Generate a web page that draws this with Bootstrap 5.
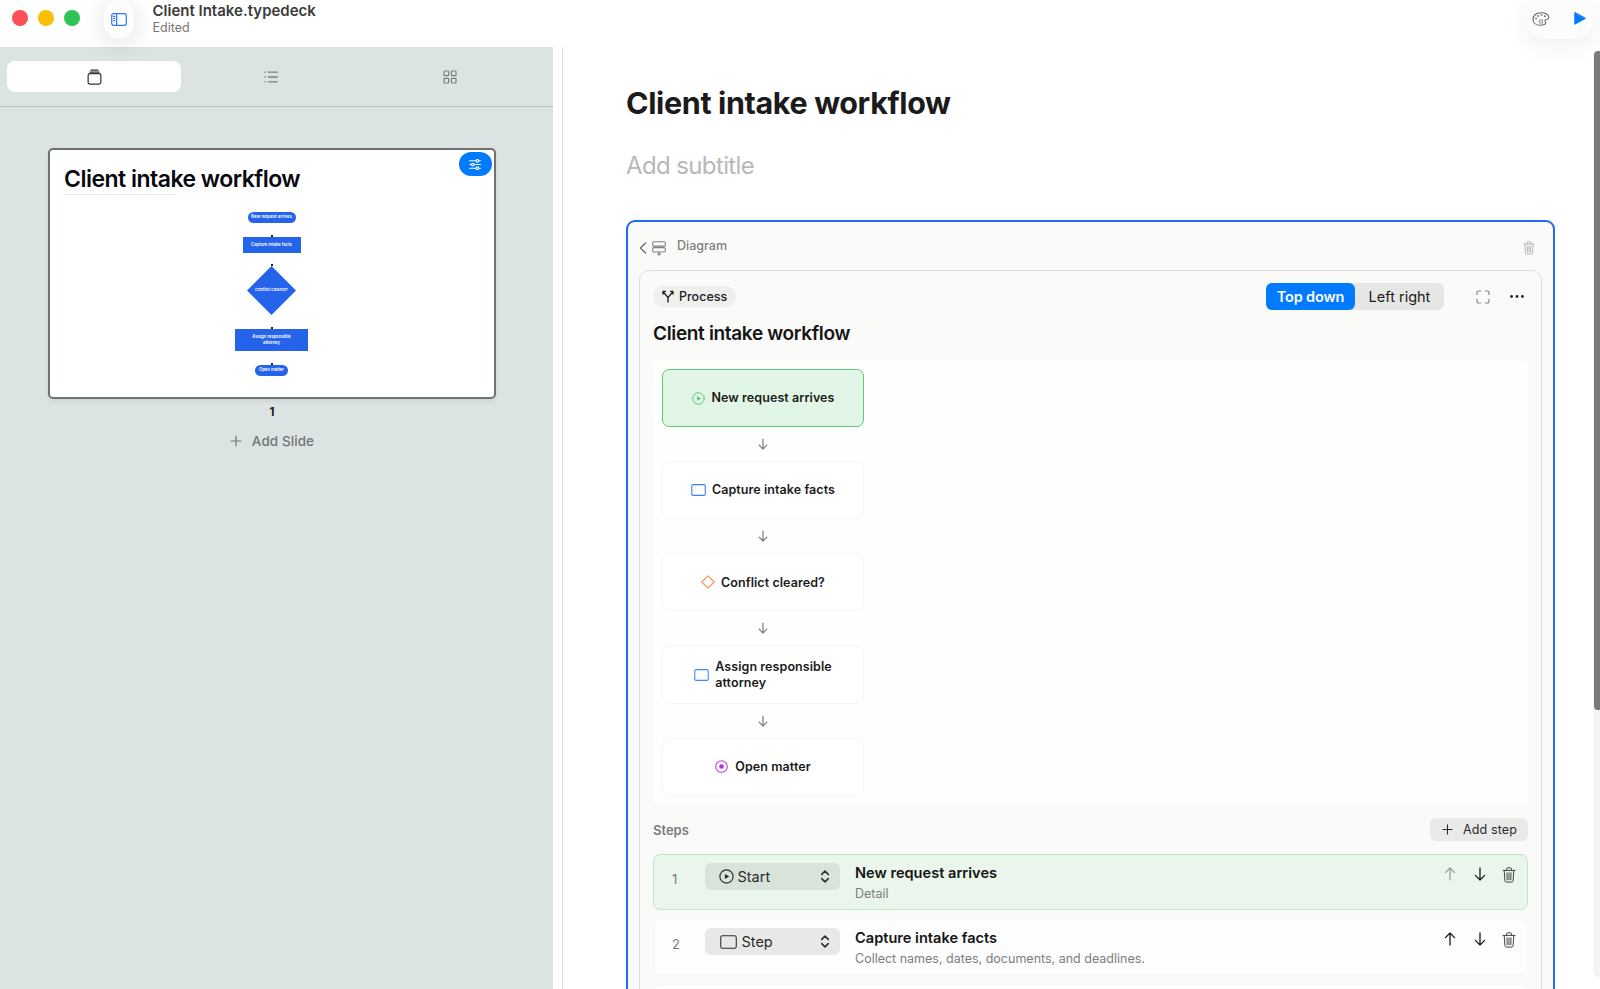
<!DOCTYPE html>
<html lang="en">
<head>
<meta charset="utf-8">
<meta name="viewport" content="width=device-width, initial-scale=1">
<title>Client Intake.typedeck</title>
<link href="https://cdn.jsdelivr.net/npm/bootstrap@5.3.0/dist/css/bootstrap.min.css" rel="stylesheet">
<style>
body{font-family:Inter,"Liberation Sans",sans-serif;color:#1b1b1b;background:#fff;height:100vh;overflow:hidden;font-size:13px;line-height:16px}
svg{display:block;flex:none;fill:none;stroke-linecap:round;stroke-linejoin:round}
svg:not([stroke]){stroke:currentColor}
.titlebar{height:47px;position:relative;z-index:2;flex:none}
.light{width:16px;height:16px}
.toggle-pill{width:30px;height:40px;border-radius:15px;background:#fdfdfd;box-shadow:0 5px 26px rgba(0,0,0,.13);margin-left:24px;margin-top:-1px}
.doc-title{font-size:15px;line-height:18px;font-weight:600;color:#3b3b3b}
.doc-state{font-size:12.5px;line-height:15px;color:#777}
.tools{width:68px;height:41px;margin-top:-2px;margin-right:6px;border-radius:20px;background:#fcfcfc;box-shadow:0 5px 26px rgba(0,0,0,.07)}
.sidebar{width:553px;background:#dce4e3}
.tabs-row{height:60px;border-bottom:1px solid #bcc4c3;padding:14px 0 0 7px}
.tab-item{height:31px;border-radius:8px;color:#7a8180}
.tab-on{background:#fff;color:#333}
.slide{width:448px;height:251px;margin:41px 0 0 47.5px;border:2px solid #6d7372;border-radius:5px;background:#fff;box-shadow:0 2px 5px rgba(0,0,0,.07)}
.slide-title{font-size:23px;line-height:28px;font-weight:600;color:#08080f;padding:15px 0 0 14.5px;letter-spacing:-.52px}
.slide-rule{width:112px;height:1px;background:#e3e3fa;margin:1px 0 0 14px}
.slide-opts{right:2px;top:2px;width:33px;height:24px;border-radius:12px;background:#007aff;color:#fff}
.node{background:#2563eb;color:#fff;font-size:4.2px;line-height:6.5px;font-weight:600;text-align:center;white-space:nowrap}
.stem{width:2px;height:2px;background:#223}
.dia{width:49px;height:49px;clip-path:polygon(50% 0,100% 50%,50% 100%,0 50%)}
.add-slide{font-size:13.5px;color:#6f7675;font-weight:500;letter-spacing:.08px}
.editor{border-left:1px solid #e2e2e2;margin-left:9px;padding:0 45px 0 63px;overflow:hidden}
.h-title{font-size:30.5px;line-height:38px;font-weight:700;letter-spacing:-.37px;margin-top:37px}
.h-sub{font-size:24px;line-height:30px;color:#b8b8b8;margin-top:28.5px;letter-spacing:-.62px}
.block{border:2px solid #2169f6;border-radius:9px;background:#fafaf8;margin-top:39.5px;height:900px;padding:0 11px}
.block-head{height:48px;color:#808080;font-weight:500;font-size:12.5px}
.panel{border:1px solid #dedede;border-radius:10px;padding:12px 13px;height:840px}
.kind{height:21px;border-radius:11px;background:#efefed;padding:0 9px 0 9px;font-weight:500;font-size:12.5px;color:#222}
.seg{height:27px;border-radius:6px;background:#e6e6e4;font-size:14.5px}
.seg-on{height:27px;width:89px;border-radius:6px;background:#007aff;color:#fff;font-weight:600;letter-spacing:-.15px}
.p-title{font-size:19px;line-height:24px;font-weight:600;margin-top:12px;color:#151515;letter-spacing:-.34px}
.flow-canvas{background:#fefefe;border-radius:6px;margin-top:14px;height:444px;padding:9px 0 0 9px}
.step-box{width:202px;height:58px;border:1px solid #f6f6f6;border-radius:7px;font-weight:600;font-size:12.5px;line-height:15.5px;letter-spacing:.07px;background:#fff}
.step-start{background:#e1f6e6;border:1.5px solid #5fcb78}
.arrow-gap{height:34.2px;width:202px;color:#808080}
.steps-label{font-weight:600;color:#7b7b7b}
.add-step{height:23px;border-radius:6px;background:#e9e9e7;padding:0 11px 0 12px;font-size:12.5px;color:#2b2b2b;letter-spacing:.12px}
.step-row{height:56px;border:1px solid #f8f8f8;border-radius:7px;background:#fdfdfd;margin-bottom:9px;padding:0 17px 0 18px}
.row-start{background:#eaf5ec;border-color:#b9ebc6}
.num{width:32.5px;color:#777;margin-top:16px}
.pick{width:135px;height:27px;border-radius:6px;background:#e8e8e8;margin-top:8px;font-size:14.5px;color:#2b2b2b;padding:0 10px 0 14px}
.row-start .pick{background:#d8e3da}
.st-title{font-size:14.6px;line-height:18px;font-weight:600;color:#151515;margin-top:9px}
.st-sub{font-size:12.5px;line-height:16px;color:#7d7d7d;margin-top:4px}
.track{right:0;top:51px;width:7px;height:926px;background:#f4f4f4;border-radius:6px 0 0 6px}
.thumb{width:6px;height:659px;margin-left:1px;background:#7a7a7a;border-radius:4px 0 0 4px}
</style>
</head>
<body>
<svg width="0" height="0" class="position-absolute">
<defs>
<symbol id="trash" viewBox="0 0 14 16"><path d="M1 3.4h12M4.6 3.2V1.8q0-1 1-1h2.8q1 0 1 1v1.4M2.2 3.6l.7 10q.1 1.5 1.6 1.5h5q1.5 0 1.6-1.5l.7-10M5 5.8l.2 7M7 5.8v7M9 5.8l-.2 7"/></symbol>
<symbol id="down" viewBox="0 0 12 14"><path d="M6 1v12M1.4 8.4 6 13l4.6-4.6"/></symbol>
<symbol id="up" viewBox="0 0 12 14"><path d="M6 13V1M1.4 5.6 6 1l4.6 4.6"/></symbol>
<symbol id="rect" viewBox="0 0 16 13"><rect x=".7" y=".7" width="14.6" height="11.6" rx="1.6"/></symbol>
<symbol id="play" viewBox="0 0 14 14"><circle cx="7" cy="7" r="6.2"/><path d="M5.5 4.6v4.8L9.6 7z" fill="currentColor" stroke="none"/></symbol>
<symbol id="updown" viewBox="0 0 9 13"><path d="M1.2 4.4 4.5 1.1l3.3 3.3M1.2 8.6l3.3 3.3 3.3-3.3"/></symbol>
<symbol id="plus" viewBox="0 0 12 12"><path d="M6 1v10M1 6h10"/></symbol>
</defs>
</svg>
<div class="d-flex flex-column vh-100 overflow-hidden">
<header class="titlebar d-flex align-items-start">
  <div class="d-flex" style="gap:10px;padding:10px 0 0 12px">
    <span class="light rounded-circle" style="background:#fb5058"></span>
    <span class="light rounded-circle" style="background:#fabf05"></span>
    <span class="light rounded-circle" style="background:#2fc257"></span>
  </div>
  <div class="toggle-pill d-flex align-items-center justify-content-center">
    <svg width="16" height="13" viewBox="0 0 16 13" stroke="#2f78f5" stroke-width="1.2"><rect x=".7" y=".7" width="14.6" height="11.6" rx="2"/><path d="M5.6 1v11M2.4 3.4h1.5M2.4 5.5h1.5M2.4 7.6h1.5"/></svg>
  </div>
  <div style="padding:2px 0 0 18.5px">
    <div class="doc-title">Client Intake.typedeck</div>
    <div class="doc-state">Edited</div>
  </div>
  <div class="tools ms-auto d-flex align-items-center justify-content-between" style="padding:0 8px 0 6px">
    <svg width="18" height="14" viewBox="0 0 18 14" stroke="#666" stroke-width="1.1"><path d="M8.6.8C4 .8 1 3.8 1 7.400 1 10.900 4 13.200 8.400 13.200c3.200 0 5.400-.8 5.300-2.500-.1-1-.9-1.300-.7-2.300.3-1.200 3.900-.6 3.900-3C16.900 2.600 13.200.8 8.600.8z"/><circle cx="9" cy="9.600" r="1.700" stroke="#999"/><path d="M4 6.500h.1M6 3.900h.1M9.400 3h.1M12.800 4.200h.1" stroke-width="1.700"/></svg>
    <svg width="12" height="13" viewBox="0 0 12 13" stroke="#007aff"><path d="M.8.8v11.400L11.200 6.500z" fill="#007aff"/></svg>
  </div>
</header>
<div class="d-flex flex-grow-1" style="min-height:0">
  <aside class="sidebar flex-shrink-0">
    <div class="tabs-row d-flex">
      <div class="tab-item tab-on d-flex align-items-center justify-content-center" style="width:174px">
        <svg width="15" height="16" viewBox="0 0 16 17" stroke-width="1.300"><rect x="1.200" y="5" width="13.600" height="11" rx="2"/><path d="M3 3.200h10M4.200 1.100h7.600"/></svg>
      </div>
      <div class="tab-item d-flex align-items-center justify-content-center" style="width:180px">
        <svg width="14" height="12" viewBox="0 0 14 12" stroke-width="1.300"><path d="M4.300 1.200h9M4.300 6h9M4.300 10.800h9M.9 1.200h.4M.9 6h.4M.9 10.800h.4"/></svg>
      </div>
      <div class="tab-item d-flex align-items-center justify-content-center" style="width:177px">
        <svg width="14" height="14" viewBox="0 0 14 14" stroke-width="1.200"><rect x="1" y="1" width="4.600" height="4.600" rx=".7"/><rect x="8.400" y="1" width="4.600" height="4.600" rx=".7"/><rect x="1" y="8.400" width="4.600" height="4.600" rx=".7"/><rect x="8.400" y="8.400" width="4.600" height="4.600" rx=".7"/></svg>
      </div>
    </div>
    <div class="slide position-relative">
      <div class="slide-title">Client intake workflow</div>
      <div class="slide-rule"></div>
      <div class="slide-opts position-absolute d-flex align-items-center justify-content-center">
        <svg width="12" height="11" viewBox="0 0 12 11" stroke-width="1.100"><path d="M.6 1.800h6.200M10 1.800h1.400M.6 5.500h1.600M5.400 5.500h6M.6 9.200h6.200M10 9.200h1.400"/><circle cx="8.400" cy="1.800" r="1.300"/><circle cx="3.800" cy="5.500" r="1.300"/><circle cx="8.400" cy="9.200" r="1.300"/></svg>
      </div>
      <div class="d-flex flex-column align-items-center" style="padding-top:17px">
        <div class="node rounded-pill d-flex align-items-center justify-content-center" style="width:48px;height:11px">New request arrives</div>
        <div class="stem" style="margin-top:12px"></div>
        <div class="node d-flex align-items-center justify-content-center" style="width:58px;height:16px">Capture intake facts</div>
        <div class="stem" style="margin-top:11px"></div>
        <div class="node dia d-flex align-items-center justify-content-center" style="font-size:4px">Conflict cleared?</div>
        <div class="stem" style="margin-top:12px"></div>
        <div class="node d-flex align-items-center justify-content-center" style="width:73px;height:22px">Assign responsible<br>attorney</div>
        <div class="stem" style="margin-top:12px"></div>
        <div class="node rounded-pill d-flex align-items-center justify-content-center" style="width:33px;height:11px">Open matter</div>
      </div>
    </div>
    <div class="text-center fw-bold" style="width:544px;font-size:11.500px;margin-top:5px">1</div>
    <div class="add-slide d-flex align-items-center justify-content-center" style="width:544px;margin-top:13px;gap:10px">
      <svg width="12" height="12" stroke-width="1.200"><use href="#plus"/></svg>Add Slide
    </div>
  </aside>
  <main class="editor flex-grow-1">
    <h1 class="h-title mb-0">Client intake workflow</h1>
    <div class="h-sub">Add subtitle</div>
    <section class="block">
      <div class="block-head d-flex align-items-center">
        <svg width="8" height="12" viewBox="0 0 8 12" stroke="#666" stroke-width="1.200" style="margin-left:0;margin-top:4px"><path d="M6.600 1 1.400 6l5.200 5"/></svg>
        <svg width="14" height="15" viewBox="0 0 14 15" stroke-width="1.100" style="margin:4px 11px 0 5px"><rect x=".7" y=".7" width="12.600" height="4.400" rx="1.200"/><rect x=".7" y="6.600" width="12.600" height="4.400" rx="1.200"/><path d="M7 5v1.600M7 11v2.800M5.600 12.800 7 14.200l1.400-1.400"/></svg>
        <span>Diagram</span>
        <svg class="ms-auto" width="12" height="14" style="margin-right:7px;margin-top:3px;color:#aaa"><use href="#trash"/></svg>
      </div>
      <div class="panel">
        <div class="d-flex align-items-center" style="height:27px">
          <div class="kind d-flex align-items-center" style="gap:5px">
            <svg width="12" height="13" viewBox="0 0 12 13" stroke="#222" stroke-width="1.400"><path d="M6 12V7.600L1.600 2.200M6 7.600l4.400-5.400M1 4V1.400h2.400M11 4V1.400H8.600"/></svg>Process
          </div>
          <div class="seg d-flex align-items-center ms-auto">
            <div class="seg-on d-flex align-items-center justify-content-center">Top down</div>
            <div class="text-center" style="width:89px">Left right</div>
          </div>
          <svg width="14" height="14" viewBox="0 0 14 14" stroke="#858585" stroke-width="1.200" style="margin-left:32px"><path d="M1 4.600V2.600Q1 1 2.600 1h2M9.400 1h2Q13 1 13 2.600v2M13 9.400v2q0 1.600-1.600 1.600h-2M4.600 13h-2Q1 13 1 11.400v-2"/></svg>
          <svg width="14" height="4" viewBox="0 0 14 4" style="margin:0 4px 0 20px"><g fill="#222" stroke="none"><circle cx="1.600" cy="1.500" r="1.400"/><circle cx="7" cy="1.500" r="1.400"/><circle cx="12.400" cy="1.500" r="1.400"/></g></svg>
        </div>
        <div class="p-title">Client intake workflow</div>
        <div class="flow-canvas">
          <div class="step-box step-start d-flex align-items-center justify-content-center" style="gap:7px"><svg width="13" height="13" stroke="#4cc468" style="color:#4cc468"><use href="#play"/></svg>New request arrives</div>
          <div class="arrow-gap d-flex align-items-center justify-content-center"><svg width="10" height="12" stroke-width="1.500"><use href="#down"/></svg></div>
          <div class="step-box d-flex align-items-center justify-content-center" style="gap:6px"><svg width="15" height="12" stroke="#3d7ff5" stroke-width="1.200"><use href="#rect"/></svg>Capture intake facts</div>
          <div class="arrow-gap d-flex align-items-center justify-content-center"><svg width="10" height="12" stroke-width="1.500"><use href="#down"/></svg></div>
          <div class="step-box d-flex align-items-center justify-content-center" style="gap:6px"><svg width="14" height="14" viewBox="0 0 14 14" stroke="#f5955a" stroke-width="1.200"><path d="M7 .8 13.200 7 7 13.200.8 7z"/></svg>Conflict cleared?</div>
          <div class="arrow-gap d-flex align-items-center justify-content-center"><svg width="10" height="12" stroke-width="1.500"><use href="#down"/></svg></div>
          <div class="step-box d-flex align-items-center justify-content-center" style="gap:6px"><svg width="15" height="12" stroke="#3d8bf5" stroke-width="1.200"><use href="#rect"/></svg><span>Assign responsible<br>attorney</span></div>
          <div class="arrow-gap d-flex align-items-center justify-content-center"><svg width="10" height="12" stroke-width="1.500"><use href="#down"/></svg></div>
          <div class="step-box d-flex align-items-center justify-content-center" style="gap:7px"><svg width="13" height="13" viewBox="0 0 13 13" stroke="#c63fe0" stroke-width="1.100"><circle cx="6.500" cy="6.500" r="5.800"/><circle cx="6.500" cy="6.500" r="2.300" fill="#b62fd4" stroke="none"/></svg>Open matter</div>
        </div>
        <div class="d-flex align-items-center justify-content-between" style="height:23px;margin:14px 0 13px">
          <span class="steps-label">Steps</span>
          <div class="add-step d-flex align-items-center" style="gap:10px"><svg width="11" height="11" stroke-width="1.200"><use href="#plus"/></svg>Add step</div>
        </div>
        <div class="step-row row-start d-flex">
          <div class="num">1</div>
          <div class="pick d-flex align-items-center"><svg width="15" height="15" stroke-width="1.100" style="margin-right:4px"><use href="#play"/></svg>Start<svg class="ms-auto" width="10" height="13" stroke-width="1.500"><use href="#updown"/></svg></div>
          <div style="margin-left:15.500px"><div class="st-title">New request arrives</div><div class="st-sub">Detail</div></div>
          <div class="ms-auto d-flex" style="padding-top:12px"><svg width="12" height="14" style="margin-right:17.500px;color:#949c95" stroke-width="1.200"><use href="#up"/></svg><svg width="12" height="14" style="margin-right:16.500px" stroke-width="1.300"><use href="#down"/></svg><svg width="14" height="16" style="color:#444;margin-right:-6px"><use href="#trash"/></svg></div>
        </div>
        <div class="step-row d-flex">
          <div class="num">2</div>
          <div class="pick d-flex align-items-center"><svg width="17" height="14" style="margin:0 5px 0 1px" stroke-width="1"><use href="#rect"/></svg>Step<svg class="ms-auto" width="10" height="13" stroke-width="1.500"><use href="#updown"/></svg></div>
          <div style="margin-left:15.500px"><div class="st-title">Capture intake facts</div><div class="st-sub">Collect names, dates, documents, and deadlines.</div></div>
          <div class="ms-auto d-flex" style="padding-top:12px"><svg width="12" height="14" style="margin-right:17.500px" stroke-width="1.300"><use href="#up"/></svg><svg width="12" height="14" style="margin-right:16.500px" stroke-width="1.300"><use href="#down"/></svg><svg width="14" height="16" style="color:#444;margin-right:-6px"><use href="#trash"/></svg></div>
        </div>
        <div class="step-row"></div>
      </div>
    </section>
  </main>
</div>
</div>
<div class="track position-absolute"><div class="thumb"></div></div>
<script src="https://cdn.jsdelivr.net/npm/bootstrap@5.3.0/dist/js/bootstrap.bundle.min.js"></script>
</body>
</html>
